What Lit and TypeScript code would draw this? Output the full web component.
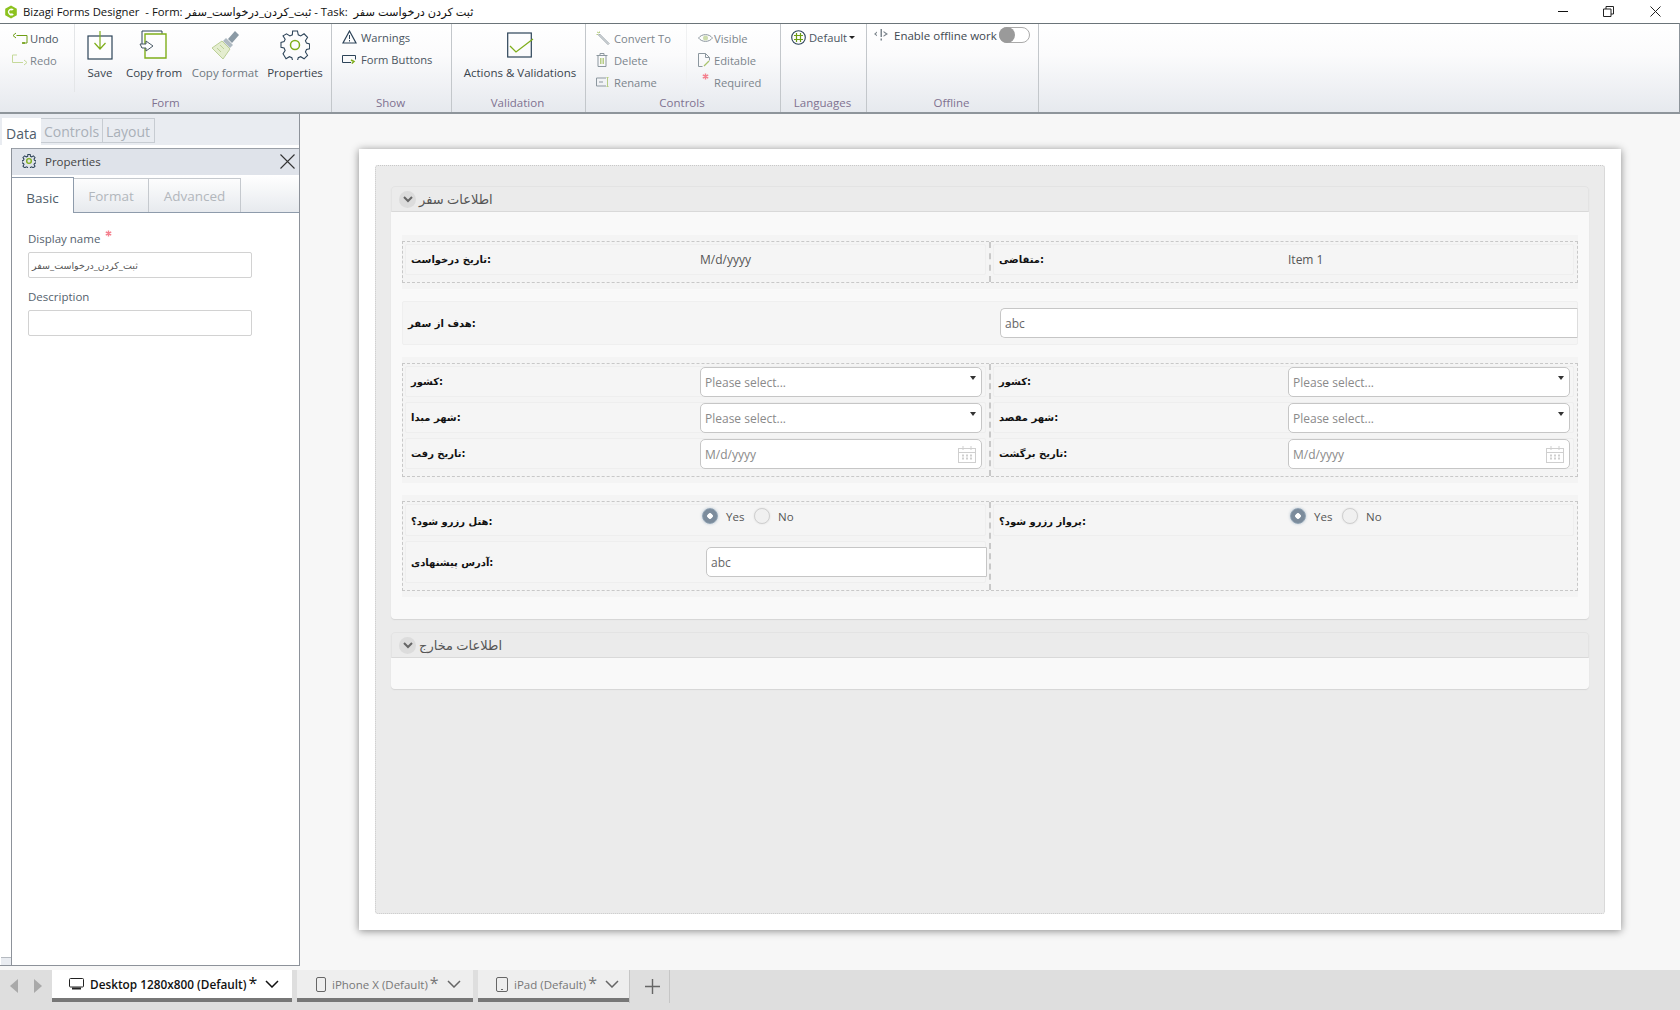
import { LitElement, html, css } from "lit";
import { customElement } from "lit/decorators.js";

const NAVY = "#2c4358";
const GREEN = "#7fae1b";

const ico = {
  logo: html`<svg width="14" height="14" viewBox="0 0 14 14"><path d="M7 .5 12.8 3.8v6.4L7 13.5 1.2 10.2V3.8z" fill="#8cc21f"/><path d="M9.8 4.6A3.4 3.4 0 1 0 9.8 9.4L8 8.2A1.3 1.3 0 0 1 7 8.6 1.7 1.7 0 1 1 8 5.6z" fill="#fff"/></svg>`,
  undo: html`<svg width="16" height="12" viewBox="0 0 16 12" fill="none" stroke="#6f9e14"><path d="M4.5 3.5H15V11H10.5"/><path d="M4 1 1 3.5 4 6" /><path d="M13 11h-3" stroke-width="1.5"/></svg>`,
  redo: html`<svg width="16" height="12" viewBox="0 0 16 12" fill="none" stroke="#c5d99a"><path d="M11 8.5H.5V1H5"/><path d="M12 6l3 2.5-3 2.5"/></svg>`,
  save: html`<svg width="26" height="30" viewBox="0 0 26 30" fill="none"><rect x="1" y="6" width="24" height="23" stroke="${NAVY}" stroke-width="1.2" fill="#fff" fill-opacity=".5"/><path d="M13 1v17M7.5 13l5.5 6 5.500-6" stroke="${GREEN}" stroke-width="1.2"/></svg>`,
  copy: html`<svg width="30" height="30" viewBox="0 0 30 30" fill="none"><path d="M3 18V1h20v3" stroke="${NAVY}" stroke-width="1"/><path d="M6 4h21v24H6z" stroke="${GREEN}" stroke-width="1.4"/><path d="M1 14h6v-3l7 5-7 5v-3H3z" stroke="#4a5a66" fill="#fff"/></svg>`,
  brush: html`<svg width="30" height="30" viewBox="0 0 30 30" fill="none"><path d="M18 9 25 1l4 4-7 8z" fill="#8b9aa5"/><path d="M16 8l7 7-3 3-7-7z" fill="#aeb9c1"/><path d="M12 11l8 8-7 10L2 18z" fill="#e4edcf" stroke="#bcd097"/><path d="M4 20l3 3M7 18l4 4M10 15l4 4" stroke="#bcd097"/></svg>`,
  gear: html`<svg width="30" height="30" viewBox="0 0 30 30" fill="none"><path d="M12.5 1h5l.8 4 2.5 1.100 3.500-2.200 3.600 3.600-2.200 3.500 1.100 2.500 3.200.8v5l-3.200.8-1.100 2.500 2.200 3.500-3.600 3.600-3.500-2.200-2.500 1.100-.8 3h-5l-.8-3-2.500-1.100-3.500 2.200L2.600 24.600l2.200-3.500-1.100-2.500-3.200-.8v-5l3.200-.8 1.100-2.500-2.200-3.500L6.200 3.900l3.500 2.200L12.200 5z" stroke="${NAVY}" stroke-width="1.1" transform="translate(.5 0) scale(.97)"/><circle cx="15" cy="15" r="4.500" stroke="${GREEN}" stroke-width="1.500"/></svg>`,
  warn: html`<svg width="15" height="14" viewBox="0 0 15 14" fill="none"><path d="M7.500 1 14 13H1z" stroke="${NAVY}" stroke-width="1.200"/><path d="M7.500 5v4M7.500 10v1.500" stroke="${NAVY}"/></svg>`,
  formBtn: html`<svg width="14" height="9" viewBox="0 0 14 9" fill="none"><path d="M9 7.500H.5v-7h13v4" stroke="${NAVY}"/><path d="M9 5l3 1.500L9.800 8.500" stroke="${GREEN}" stroke-width="1.500"/></svg>`,
  check: html`<svg width="27" height="26" viewBox="0 0 27 26" fill="none"><rect x=".7" y="1" width="23.600" height="24" stroke="${NAVY}" stroke-width="1.200"/><path d="M3 14l6 6L26 7" stroke="${GREEN}" stroke-width="1.300"/></svg>`,
  wand: html`<svg width="14" height="14" viewBox="0 0 14 14" fill="none"><path d="M3.500 3 13 12.500l-1 1L2.500 4z" stroke="#8c979f"/><path d="M1 1l2 1M3.500.5V2M.5 3.500H2" stroke="#b6cc84"/></svg>`,
  trash: html`<svg width="12" height="14" viewBox="0 0 12 14" fill="none"><path d="M.5 2.500h11M4 2.500v-2h4v2M2 2.500v11h8v-11" stroke="#8c979f"/><path d="M4.500 5v6M6 5v6M7.500 5v6" stroke="#b6cc84"/></svg>`,
  rename: html`<svg width="14" height="10" viewBox="0 0 14 10" fill="none"><path d="M10 1H.5v8H10" stroke="#8c979f"/><path d="M3 5h4" stroke="#8c979f"/><path d="M11.500.5v9M10.500.5h2M10.500 9.500h2" stroke="#b6cc84"/></svg>`,
  eye: html`<svg width="15" height="10" viewBox="0 0 15 10" fill="none"><path d="M.5 5C4 .5 11 .5 14.500 5 11 9.500 4 9.500.5 5z" stroke="#8c979f"/><circle cx="7.500" cy="5" r="2.500" fill="#cddcae"/></svg>`,
  doc: html`<svg width="12" height="14" viewBox="0 0 12 14" fill="none"><path d="M.5 13.500V.5h7l4 4v3M.5 13.500h4M7.500.5v4h4" stroke="#8c979f"/><path d="M6 13l5-5" stroke="#a9c36d" stroke-width="1.300"/></svg>`,
  globe: html`<svg width="15" height="15" viewBox="0 0 15 15" fill="none"><circle cx="7.500" cy="7.500" r="6.800" stroke="${NAVY}" stroke-width="1.100"/><path d="M5.500 3v9M9.500 3v9M3 5.500h9M3 9.500h9" stroke="#6f9e14" stroke-width="1.200"/></svg>`,
  offline: html`<svg width="14" height="12" viewBox="0 0 14 12" fill="#7d868d"><path d="M6.500 0h1.500v8H6.500zM6.500 9.500h1.500V11.500H6.500z"/><path d="M0 5l3-2.500v1.200L1.800 5 3 6v1.200zM14 5 9.500 2v1.200L11.800 5 9.500 6.500v1.200z"/></svg>`,
  star: html`<svg class="star" width="7" height="7" viewBox="0 0 9 9" stroke="#f4808e" stroke-width="1.800"><path d="M4.500 .5v8M1 2.500l7 4M8 2.500l-7 4"/></svg>`,
  cog: html`<svg width="14" height="14" viewBox="0 0 30 30" fill="none"><path d="M12.500 1h5l.8 4 2.500 1.100 3.500-2.200 3.600 3.600-2.200 3.500 1.100 2.500 3.200.8v5l-3.200.8-1.100 2.500 2.200 3.500-3.600 3.600-3.500-2.200-2.500 1.100-.8 3h-5l-.8-3-2.500-1.100-3.500 2.200-3.600-3.600 2.200-3.500-1.100-2.500-3.200-.8v-5l3.200-.8 1.100-2.500-2.200-3.500 3.600-3.600 3.500 2.200L12.200 5z" stroke="${NAVY}" stroke-width="2.200"/><circle cx="15" cy="15" r="5" stroke="${GREEN}" stroke-width="3"/></svg>`,
  x: html`<svg width="15" height="15" viewBox="0 0 15 15" stroke="#333" stroke-width="1.100"><path d="M.5.5l14 14M14.500.5l-14 14"/></svg>`,
  cal: html`<svg width="18" height="17" viewBox="0 0 18 17" fill="none" stroke="#cfcfcf"><rect x=".5" y="2.500" width="17" height="14"/><path d="M.5 6.500h17M5 0v4M13 0v4"/><path d="M4 9.500h10M4 12.500h10" stroke-dasharray="2 2" stroke-width="2"/></svg>`,
  chev: html`<svg width="10" height="7" viewBox="0 0 10 7" fill="none" stroke="#666" stroke-width="2"><path d="M1 1l4 4 4-4"/></svg>`,
  monitor: html`<svg width="15" height="12" viewBox="0 0 15 12" fill="none" stroke="#222"><rect x=".5" y=".5" width="14" height="8.500" rx="1"/><path d="M3 10.500h9" stroke-width="2"/></svg>`,
  phone: html`<svg width="10" height="15" viewBox="0 0 10 15" fill="none" stroke="#666"><rect x=".5" y=".5" width="9" height="14" rx="1.500"/></svg>`,
  tablet: html`<svg width="12" height="15" viewBox="0 0 12 15" fill="none" stroke="#666"><rect x=".5" y=".5" width="11" height="14" rx="1.500"/><path d="M5 12.500h2"/></svg>`,
  down: (c: string) => html`<svg width="14" height="8" viewBox="0 0 14 8" fill="none" stroke="${c}" stroke-width="1.500"><path d="M1 1l6 6 6-6"/></svg>`,
};

@customElement("app-root")
export class AppRoot extends LitElement {
  static styles = css`
    :host { display: block; width: 1680px; height: 1010px; overflow: hidden; background: #f7f7f7;
      font-family: "Open Sans", "DejaVu Sans", sans-serif; font-size: 12px; color: #4a5560; }
    * { box-sizing: border-box; }
    .title { height: 23px; background: #fff; display: flex; align-items: center; padding-left: 4px; color: #111;
      font-family: "Open Sans", "DejaVu Sans", sans-serif; font-size: 11.3px; white-space: pre; }
    .title svg:first-child { margin-right: 5px; }
    .win { margin-left: auto; display: flex; align-items: center; }
    .win .min { width: 10px; height: 1px; background: #111; margin-right: 35px; }
    .win .res { margin-right: 36px; }
    .win .cls { margin-right: 19px; }
    .ribbon { height: 91px; display: flex; font-size: 11.5px; border-top: 1px solid #6b7479; border-bottom: 2px solid #8e959b;
      border-right: 1px solid #8e959b; background: linear-gradient(#fff 0%, #fbfbfc 35%, #e6e9ee 100%); }
    .grp { position: relative; border-right: 1px solid #c3c7cb; display: flex; }
    .g-form { width: 332px; } .g-show { width: 120px; } .g-val { width: 134px; }
    .g-ctl { width: 195px; } .g-lang { width: 86px; } .g-off { width: 172px; }
    .glabel { position: absolute; left: 0; right: 2px; bottom: 0; height: 19px; text-align: center; line-height: 19px; color: #7f7290; }
    .g-form .glabel { right: 0; }
    .smallcol { display: flex; flex-direction: column; padding-top: 3px; gap: 0; }
    .sm { height: 22px; display: flex; align-items: center; white-space: nowrap; font-size: 11.2px; }
    .sm.dis { color: #7c858c; }
    .iw { display: flex; align-items: center; justify-content: center; }
    .undo { width: 75px; height: 68px; border-right: 1px solid #e4e6e8; padding-left: 12px; }
    .undo .iw { width: 18px; justify-content: flex-start; }
    .big { display: flex; flex-direction: column; align-items: center; padding-top: 6px; white-space: nowrap; }
    .big .iw { height: 30px; }
    .big span { margin-top: 4px; line-height: 17px; color: #39434c; }
    .big.dis span { color: #6f7880; }
    .b-save { width: 50px; } .b-copy { width: 58px; } .b-fmt { width: 84px; } .b-prop { width: 56px; }
    .b-val { width: 100%; padding: 6px 0 0 3px; }
    .smallcol.show { padding-top: 2px; padding-left: 10px; }
    .show .iw { width: 19px; justify-content: flex-start; }
    .smallcol.c1 { width: 101px; padding-left: 10px; padding-top: 3px; border-right: 1px solid #f0f1f2; height: 70px; }
    .c1 .iw { width: 18px; justify-content: flex-start; }
    .smallcol.c2 { padding-left: 11px; padding-top: 3px; }
    .c2 .iw { width: 16px; justify-content: flex-start; }
    .c2 .sm:last-child .iw { padding: 0 0 11px 4px; }
    .lang { padding: 2px 0 0 10px; display: flex; align-items: flex-start; }
    .lang .sm { gap: 3px; height: 22px; }
    .caret { width: 0; height: 0; border: 3px solid transparent; border-top: 3px solid #222; border-bottom: 0; margin-left: -1px; }
    .off { display: flex; align-items: center; height: 22px; margin: 0 0 0 7px; gap: 6px; color: #3f4850; font-size: 11.5px; }
    .off span { white-space: nowrap; }
    .toggle { flex: none; width: 31px; height: 16px; margin-left: -4px; border: 1px solid #aaa; border-radius: 8px; position: relative; background: #fff; }
    .toggle i { position: absolute; left: -1px; top: -1px; width: 16px; height: 16px; border-radius: 50%; background: #9a9a9a; }

    .main { height: 856px; display: flex; }
    .pane { width: 300px; height: 852px; background: #fff; border-right: 1px solid #8d929a; border-bottom: 1px solid #8d929a; display: flex; flex-direction: column; }
    .ptabs { height: 31px; background: #e9ecf1; display: flex; align-items: flex-end; padding: 0 0 2px 2px; flex: none; }
    .ptab { height: 25px; padding: 0 3px; border: 1px solid #c7ccd2; border-left: 0; font-size: 14px; line-height: 25px; color: #a9b0b8; }
    .ptab.on { height: 27px; width: 39px; background: #fff; color: #4f5d6b; border: 0; margin-bottom: -2px; padding-left: 4px; line-height: 31px; }
    .ptab.w1 { width: 62px; } .ptab.w2 { width: 52px; }
    .pbody { flex: 1; display: flex; flex-direction: column; margin: 3px 0 0 11px; border-left: 1px solid #8d929a; position: relative; }
    .scrollbox { position: absolute; left: -11px; bottom: 0; width: 10px; height: 8px; background: #e9ecf1; border-top: 1px solid #b5bac0; }
    .phead { height: 27px; flex: none; background: #dfe3ea; border-top: 1px solid #9aa0a8; display: flex; align-items: center; padding: 0 0 2px 10px; color: #444; gap: 9px; font-size: 11.5px; }
    .phead svg:last-child { margin-left: auto; margin-right: 4px; }
    .itabs { height: 38px; flex: none; display: flex; align-items: flex-end; border-bottom: 1px solid #8e9bab; background: linear-gradient(#fff, #e7eaee); }
    .itab { height: 34px; border: 1px solid #c5c9ce; border-bottom: 0; border-left: 0; font-size: 13.500px; color: #b2b7bc; display: flex; align-items: center; justify-content: center; }
    .itab.a { width: 62px; height: 36px; background: #fff; color: #4f5d6b; border: 0; border-top: 1px solid #8e9bab; border-right: 1px solid #8e9bab; margin-bottom: -1px; padding-top: 4px; }
    .itab.b { width: 75px; } .itab.c { width: 92px; }
    .pform { padding: 16px 0 0 16px; }
    .pform .l { height: 20px; line-height: 20px; color: #55626e; display: flex; gap: 5px; font-size: 11.5px; }
    .pform .l .star { margin-top: 1px; }
    .pinp { width: 224px; height: 26px; border: 1px solid #d2d2d2; border-radius: 2px; margin: 3px 0 9px; padding: 0 3px; display: flex; align-items: center; font-size: 9.500px; color: #555; }

    .canvas { flex: 1; }
    .card { margin: 35px 0 0 59px; width: 1262px; height: 781px; background: #fff; padding: 16px; box-shadow: 0 1px 8px rgba(0,0,0,.45); }
    .panel { height: 749px; background: #ebebeb; border: 1px dotted #c8c8c8; border-radius: 3px; padding: 20px 15px 0; }
    .sec { background: #f9f9f9; border-radius: 4px; box-shadow: 0 1px 1px #d5d5d5; }
    .sec + .sec { margin-top: 13px; }
    .shead { height: 26px; background: #ebebeb; border: 1px solid #e3e3e3; border-bottom: 1px solid #d9d9d9; border-radius: 4px 4px 0 0; display: flex; align-items: center; padding-left: 7px; gap: 3px; font-size: 13px; color: #555; }
    .cv { width: 17px; height: 17px; border-radius: 50%; background: #dcdcdc; display: flex; align-items: center; justify-content: center; }
    .sbody { padding: 23px 11px 22px; }
    .s2 { height: 57px; }
    .band { background: #f4f4f4; padding: 6px 0; }
    .band + .single, .single + .band { margin-top: 12px; }
    .band + .band { margin-top: 12px; }
    .dash { display: flex; border: 1px dashed #c8c8c8; }
    .col { flex: 1; padding: 2px 3px 7px 2px; display: flex; flex-direction: column; gap: 5px; }
    .col + .col { border-left: 2px dashed #c8c8c8; padding: 2px 3px 7px 2px; }
    .row { height: 31px; border: 1px solid #eee; border-radius: 2px; display: flex; align-items: center; background: #f5f5f5; }
    .lab { width: 294px; flex: none; padding-left: 5px; font-family: "DejaVu Sans", sans-serif; font-weight: 700; font-size: 10px; color: #111; white-space: nowrap; }
    .val { color: #555; }
    .ctl { flex: 1; height: 30px; align-self: flex-end; margin: 0 3px -1px 0; background: #fff; border: 1px solid #c6c6c6; border-radius: 5px; display: flex; align-items: center; padding: 0 4px; color: #666; position: relative; }
    .ph { color: #8a8a8a; }
    .dd { position: absolute; right: 5px; top: 8px; width: 0; height: 0; border: 3px solid transparent; border-top: 4px solid #333; border-bottom: 0; }
    .ctl svg { position: absolute; right: 5px; top: 6px; }
    .single { height: 44px; border: 1px solid #efefef; border-radius: 2px; background: #f5f5f5; display: flex; align-items: center; padding-left: 5px; }
    .single .lab { width: 592px; padding-left: 0; }
    .single .ctl { height: 30px; align-self: center; margin: 0 -1px 0 0; border-radius: 5px 0 0 5px; border-right-color: #ddd; }
    .rh { height: 32px; align-items: flex-start; }
    .rh .lab { align-self: center; margin-top: 3px; }
    .ra { height: 42px; }
    .ra .ctl { height: 30px; align-self: center; margin: 0 -2px 0 6px; border-radius: 5px 0 0 5px; }
    .radios { display: flex; align-items: center; height: 22px; color: #555; font-size: 11.500px; padding-left: 2px; }
    .rd { width: 16px; height: 16px; border-radius: 50%; border: 1px solid #cfcfcf; background: #f0f0f0; box-shadow: 0 0 2px #ddd; margin-right: 8px; }
    .rd.on { background: radial-gradient(circle, #fff 0 2.500px, #7c8c9c 3px); border-color: #8fa2b3; box-shadow: 0 0 3px #b9c6d2; }
    .radios .t1 { width: 21px; margin-right: 7px; }
    .empty { flex: 1; }

    .bar { height: 40px; background: #dedede; display: flex; align-items: flex-start; }
    .nav { width: 52px; height: 32px; display: flex; align-items: center; gap: 16px; padding-left: 10px; }
    .nav i { width: 0; height: 0; border: 7px solid transparent; }
    .nav .l { border-left: 0; border-right: 8px solid #a9a9a9; }
    .nav .r { border-right: 0; border-left: 8px solid #a9a9a9; }
    .dt { height: 32px; border-bottom: 4px solid #777; background: #eee; display: flex; align-items: center; color: #777; white-space: nowrap; margin-right: 5px; font-size: 11.5px; }
    .dt.on { background: #fff; color: #111; font-weight: 600; font-size: 11.800px; }
    .dt1 { width: 240px; padding-left: 17px; } .dt2 { width: 176px; padding-left: 19px; } .dt3 { width: 151px; padding-left: 18px; margin-right: 0; }
    .dt .name { margin-left: 6px; }
    .dt .st { font-size: 16px; line-height: 10px; margin: -2px 0 0 2px; font-weight: 400; }
    .dt .ch { margin-left: 8px; display: flex; }
    .plus { width: 41px; height: 33px; padding-left: 6px; border-left: 1px solid #c6c6c6; border-right: 1px solid #c6c6c6; display: flex; align-items: center; justify-content: center; }
  `;

  private sm(icon: unknown, text: string, dis = false) {
    return html`<div class="sm ${dis ? "dis" : ""}"><div class="iw">${icon}</div>${text}</div>`;
  }

  private ribbon() {
    return html`<div class="ribbon">
      <div class="grp g-form">
        <div class="smallcol undo">${this.sm(ico.undo, "Undo")}${this.sm(ico.redo, "Redo", true)}</div>
        <div class="big b-save"><div class="iw">${ico.save}</div><span>Save</span></div>
        <div class="big b-copy"><div class="iw">${ico.copy}</div><span>Copy from</span></div>
        <div class="big b-fmt dis"><div class="iw">${ico.brush}</div><span>Copy format</span></div>
        <div class="big b-prop"><div class="iw">${ico.gear}</div><span>Properties</span></div>
        <div class="glabel">Form</div>
      </div>
      <div class="grp g-show">
        <div class="smallcol show">${this.sm(ico.warn, "Warnings")}${this.sm(ico.formBtn, "Form Buttons")}</div>
        <div class="glabel">Show</div>
      </div>
      <div class="grp g-val">
        <div class="big b-val"><div class="iw">${ico.check}</div><span>Actions &amp; Validations</span></div>
        <div class="glabel">Validation</div>
      </div>
      <div class="grp g-ctl">
        <div class="smallcol c1">${this.sm(ico.wand, "Convert To", true)}${this.sm(ico.trash, "Delete", true)}${this.sm(ico.rename, "Rename", true)}</div>
        <div class="smallcol c2">${this.sm(ico.eye, "Visible", true)}${this.sm(ico.doc, "Editable", true)}${this.sm(ico.star, "Required", true)}</div>
        <div class="glabel">Controls</div>
      </div>
      <div class="grp g-lang">
        <div class="lang"><div class="sm">${ico.globe}Default<i class="caret"></i></div></div>
        <div class="glabel">Languages</div>
      </div>
      <div class="grp g-off">
        <div class="off">${ico.offline}<span>Enable offline work</span><div class="toggle"><i></i></div></div>
        <div class="glabel">Offline</div>
      </div>
    </div>`;
  }

  private pane() {
    return html`<div class="pane">
      <div class="ptabs">
        <div class="ptab on">Data</div><div class="ptab w1">Controls</div><div class="ptab w2">Layout</div>
      </div>
      <div class="pbody">
        <div class="scrollbox"></div>
        <div class="phead">${ico.cog}<span>Properties</span>${ico.x}</div>
        <div class="itabs"><div class="itab a">Basic</div><div class="itab b">Format</div><div class="itab c">Advanced</div></div>
        <div class="pform">
          <div class="l">Display name ${ico.star}</div>
          <div class="pinp">ثبت_کردن_درخواست_سفر</div>
          <div class="l">Description</div>
          <div class="pinp"></div>
        </div>
      </div>
    </div>`;
  }

  private sel(label: string) {
    return html`<div class="row"><div class="lab">${label}</div><div class="ctl"><span class="ph">Please select...</span><i class="dd"></i></div></div>`;
  }
  private date(label: string) {
    return html`<div class="row"><div class="lab">${label}</div><div class="ctl"><span class="ph">M/d/yyyy</span>${ico.cal}</div></div>`;
  }
  private radio(label: string) {
    return html`<div class="row rh"><div class="lab">${label}</div>
      <div class="radios"><i class="rd on"></i><span class="t1">Yes</span><i class="rd"></i><span>No</span></div></div>`;
  }

  private form() {
    return html`<div class="card"><div class="panel">
      <div class="sec">
        <div class="shead"><div class="cv">${ico.chev}</div><span>اطلاعات سفر</span></div>
        <div class="sbody">
          <div class="band"><div class="dash">
            <div class="col"><div class="row"><div class="lab">تاریخ درخواست:</div><div class="val">M/d/yyyy</div></div></div>
            <div class="col"><div class="row"><div class="lab">متقاضی:</div><div class="val">Item 1</div></div></div>
          </div></div>
          <div class="single"><div class="lab">هدف از سفر:</div><div class="ctl">abc</div></div>
          <div class="band"><div class="dash">
            <div class="col">${this.sel("کشور:")}${this.sel("شهر مبدا:")}${this.date("تاریخ رفت:")}</div>
            <div class="col">${this.sel("کشور:")}${this.sel("شهر مقصد:")}${this.date("تاریخ برگشت:")}</div>
          </div></div>
          <div class="band"><div class="dash">
            <div class="col">${this.radio("هتل رزرو شود؟:")}
              <div class="row ra"><div class="lab">آدرس پیشنهادی:</div><div class="ctl">abc</div></div></div>
            <div class="col">${this.radio("پرواز رزرو شود؟:")}<div class="empty"></div></div>
          </div></div>
        </div>
      </div>
      <div class="sec s2">
        <div class="shead"><div class="cv">${ico.chev}</div><span>اطلاعات مخارج</span></div>
      </div>
    </div></div>`;
  }

  private bar() {
    return html`<div class="bar">
      <div class="nav"><i class="l"></i><i class="r"></i></div>
      <div class="dt on dt1">${ico.monitor}<span class="name">Desktop 1280x800 (Default)</span><span class="st">*</span><span class="ch">${ico.down("#111")}</span></div>
      <div class="dt dt2">${ico.phone}<span class="name">iPhone X (Default)</span><span class="st">*</span><span class="ch">${ico.down("#666")}</span></div>
      <div class="dt dt3">${ico.tablet}<span class="name">iPad (Default)</span><span class="st">*</span><span class="ch">${ico.down("#666")}</span></div>
      <div class="plus"><svg width="15" height="15" viewBox="0 0 16 16" stroke="#666" stroke-width="1.500"><path d="M8 0v16M0 8h16"/></svg></div>
    </div>`;
  }

  render() {
    return html`
      <div class="title">${ico.logo}<span>Bizagi Forms Designer  - Form: ثبت_کردن_درخواست_سفر - Task:  ثبت کردن درخواست سفر</span>
        <div class="win">
          <i class="min"></i>
          <svg class="res" width="11" height="11" viewBox="0 0 11 11" fill="none" stroke="#222"><path d="M.5 3h7.500v7.500H.5zM3 3V.5h7.500V8H8"/></svg>
          <svg class="cls" width="11" height="11" viewBox="0 0 11 11" stroke="#222"><path d="M.5.5l10 10M10.500.5l-10 10"/></svg>
        </div>
      </div>
      ${this.ribbon()}
      <div class="main">${this.pane()}<div class="canvas">${this.form()}</div></div>
      ${this.bar()}
    `;
  }
}
